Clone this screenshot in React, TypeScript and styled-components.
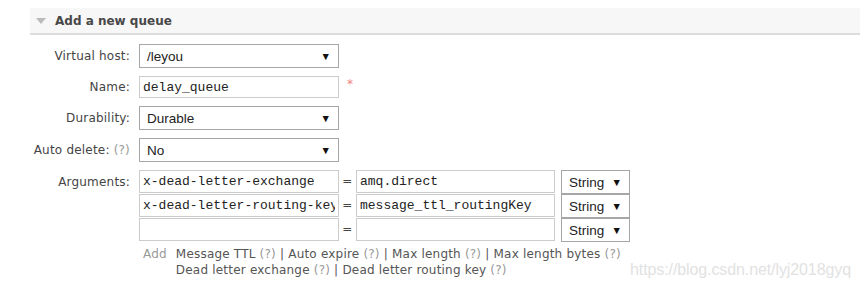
import React from 'react';
import styled, { createGlobalStyle } from 'styled-components';

const GlobalStyle = createGlobalStyle`
	body {
		margin: 0;
		background: #fff;
		font-family: 'DejaVu Sans', Verdana, sans-serif;
		font-size: 12px;
		color: #444;
	}
`;

const Page = styled.div`
	position: relative;
	padding: 8px 0 0 30px;
	height: 280px;
	overflow: hidden;
`;

const SectionHeader = styled.div`
	display: flex;
	align-items: center;
	gap: 9px;
	height: 25px;
	padding-left: 6px;
	background: #f7f7f7;
	border-bottom: 2px solid #ddd;
	font-size: 12px;
	font-weight: bold;
	color: #484848;
`;

const Triangle = styled.span`
	width: 0;
	height: 0;
	border-left: 5px solid transparent;
	border-right: 5px solid transparent;
	border-top: 6px solid #bbb;
`;

const Form = styled.div`
	display: grid;
	grid-template-columns: 100px auto;
	column-gap: 9px;
	row-gap: 8px;
	margin-top: 9px;
	align-items: center;
	letter-spacing: 0.2px;
`;

const Label = styled.label<{ $top?: boolean }>`
	justify-self: end;
	align-self: ${(p) => (p.$top ? 'start' : 'center')};
	padding-top: ${(p) => (p.$top ? '5px' : '0')};
	color: #444;
	white-space: nowrap;
`;

const Help = styled.span`
	color: #999;
`;

const FieldWrap = styled.div`
	display: flex;
	align-items: center;
	gap: 8px;
`;

const Select = styled.div<{ $width: number }>`
	box-sizing: border-box;
	display: flex;
	align-items: center;
	justify-content: space-between;
	width: ${(p) => p.$width}px;
	height: 24px;
	padding: 0 7px 0 7px;
	border: 1px solid #a6a6a6;
	background: #fff;
	font-family: 'Liberation Sans', Arial, sans-serif;
	font-size: 13.5px;
	letter-spacing: 0;
	color: #222;
`;

const Arrow = styled.span`
	font-size: 10.5px;
	color: #111;
`;

const TextInput = styled.input<{ $width: number; $height?: number }>`
	box-sizing: border-box;
	width: ${(p) => p.$width}px;
	height: ${(p) => p.$height ?? 23}px;
	margin: 0;
	padding: 0 3px;
	border: 1px solid #ccc;
	outline: none;
	background: #fff;
	font-family: 'Liberation Mono', 'Courier New', monospace;
	font-size: 13px;
	letter-spacing: 0;
	color: #222;
`;

const Required = styled.span`
	color: #f08080;
	font-size: 12px;
	margin-top: -6px;
`;

const ArgTable = styled.div`
	display: flex;
	flex-direction: column;
`;

const ArgRow = styled.div`
	display: flex;
	align-items: flex-start;
	height: 24px;
`;

const Equals = styled.span`
	width: 17px;
	text-align: center;
	line-height: 23px;
	color: #444;
`;

const TypeCell = styled.div`
	margin-left: 6px;
`;

const AddLine = styled.div`
	display: flex;
	gap: 9px;
	margin: 4px 0 0 4px;
	line-height: 16px;
`;

const AddLabel = styled.span`
	color: #999;
`;

const Shortcuts = styled.div`
	color: #555;
`;

const Watermark = styled.div`
	position: absolute;
	left: 630px;
	top: 261px;
	font-family: 'Liberation Sans', Arial, sans-serif;
	font-size: 16px;
	color: #e2e2e2;
	text-shadow: 0 0 1px #fff;
	letter-spacing: -0.1px;
`;

const args = [
	{ key: 'x-dead-letter-exchange', value: 'amq.direct' },
	{ key: 'x-dead-letter-routing-key', value: 'message_ttl_routingKey' },
	{ key: '', value: '' },
];

const FakeSelect = ({ value, width }: { value: string; width: number }) => (
	<Select $width={width}>
		<span>{value}</span>
		<Arrow>▼</Arrow>
	</Select>
);

const Shortcut = ({ name, last }: { name: string; last?: boolean }) => (
	<>
		{name} <Help>(?)</Help>
		{last ? '' : ' | '}
	</>
);

export default function App() {
	return (
		<Page>
			<GlobalStyle />
			<SectionHeader>
				<Triangle />
				<span>Add a new queue</span>
			</SectionHeader>
			<Form>
				<Label>Virtual host:</Label>
				<FakeSelect value="/leyou" width={200} />

				<Label>Name:</Label>
				<FieldWrap>
					<TextInput $width={200} $height={22} value="delay_queue" readOnly />
					<Required>*</Required>
				</FieldWrap>

				<Label>Durability:</Label>
				<FakeSelect value="Durable" width={200} />

				<Label>
					Auto delete: <Help>(?)</Help>
				</Label>
				<FakeSelect value="No" width={200} />

				<Label $top>Arguments:</Label>
				<div>
					<ArgTable>
						{args.map((a, i) => (
							<ArgRow key={i}>
								<TextInput $width={200} value={a.key} readOnly />
								<Equals>=</Equals>
								<TextInput $width={199} value={a.value} readOnly />
								<TypeCell>
									<FakeSelect value="String" width={69} />
								</TypeCell>
							</ArgRow>
						))}
					</ArgTable>
					<AddLine>
						<AddLabel>Add</AddLabel>
						<Shortcuts>
							<Shortcut name="Message TTL" />
							<Shortcut name="Auto expire" />
							<Shortcut name="Max length" />
							<Shortcut name="Max length bytes" last />
							<br />
							<Shortcut name="Dead letter exchange" />
							<Shortcut name="Dead letter routing key" last />
						</Shortcuts>
					</AddLine>
				</div>
			</Form>
			<Watermark>https://blog.csdn.net/lyj2018gyq</Watermark>
		</Page>
	);
}
